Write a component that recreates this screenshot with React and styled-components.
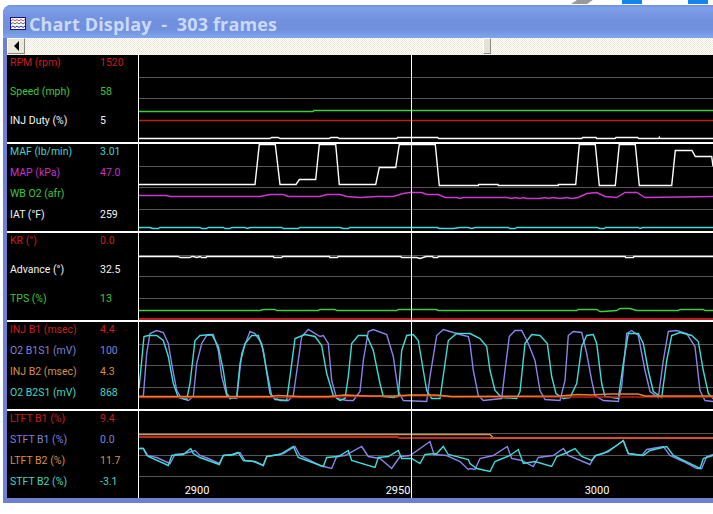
import React from 'react';
import styled, { createGlobalStyle } from 'styled-components';

const RED = '#c01c1c';
const GREEN = '#3ed03e';
const WHITE = '#ffffff';
const CYAN = '#3fdcd8';
const MAGENTA = '#d038d0';
const PURPLE = '#8a84e8';
const ORANGE = '#e8802c';
const TAN = '#c8985a';

const LABEL = {
  red: '#c81e1e',
  green: '#3cc83c',
  white: '#f4f4f4',
  cyan: '#44d4cc',
  magenta: '#c832c8',
  purple: '#8080d8',
  orange: '#d89044',
  teal: '#40d8c0',
};

// crop coordinates of the reference -> page coordinates, y snapped to pixel centres
const trace = (pts, dx, dy) =>
  pts.map(([x, y]) => `${(x / 3 + dx).toFixed(1)},${Math.floor(y / 3 + dy) + 0.5}`).join(' ');

const join = (...parts) => parts.join(' ');

const PANELS = [
  {
    top: 55,
    gap: 15,
    grid: [77.5, 98.5],
    signals: [
      ['RPM (rpm)', '1520', 'red'],
      ['Speed (mph)', '58', 'green'],
      ['INJ Duty (%)', '5', 'white'],
    ],
    lines: [
      { color: GREEN, points: '139,111.5 313,111.5 314,110.5 713,110.5' },
      { color: RED, points: '139,120.5 713,120.5' },
      {
        color: WHITE,
        points: join(
          trace([[416, 415], [810, 415], [815, 412], [835, 412], [840, 415], [988, 415], [992, 412], [1013, 412], [1018, 415], [1079, 415]], 0, 0),
          trace([[0, 415], [110, 415], [113, 412], [233, 412], [236, 415], [665, 415], [668, 412], [708, 412], [710, 415], [765, 415], [768, 412], [833, 412], [836, 415], [897, 415], [898, 412], [899, 415], [1059, 415]], 360, 0),
        ),
      },
    ],
  },
  {
    top: 144,
    gap: 7,
    grid: [166.5, 187.5, 209.5],
    signals: [
      ['MAF (lb/min)', '3.01', 'cyan'],
      ['MAP (kPa)', '47.0', 'magenta'],
      ['WB O2 (afr)', '', 'green'],
      ['IAT (°F)', '259', 'white'],
    ],
    lines: [
      {
        color: CYAN,
        points: join(
          trace([[416, 262], [450, 262], [458, 265], [475, 265], [480, 262], [600, 262], [605, 265], [620, 265], [625, 262], [670, 262], [675, 265], [690, 265], [695, 262], [735, 262], [742, 265], [750, 262], [845, 262], [850, 265], [895, 265], [900, 262], [1020, 262], [1030, 265], [1045, 265], [1050, 262], [1079, 262]], 0, 140),
          trace([[0, 262], [232, 262], [238, 265], [280, 265], [300, 262], [325, 262], [335, 265], [345, 262], [445, 262], [450, 265], [465, 265], [470, 262], [712, 262], [720, 265], [732, 265], [737, 262], [835, 262], [840, 265], [848, 262], [1059, 262]], 360, 140),
        ),
      },
      {
        color: MAGENTA,
        points: join(
          trace([[416, 165], [500, 167], [510, 170], [780, 170], [810, 163], [850, 163], [865, 170], [960, 170], [980, 163], [1020, 163], [1040, 170], [1079, 172]], 0, 140),
          trace([[0, 172], [50, 170], [100, 170], [130, 160], [150, 157], [185, 157], [200, 162], [235, 164], [255, 172], [290, 172], [300, 175], [310, 172], [440, 172], [455, 174], [465, 172], [480, 175], [490, 172], [500, 176], [540, 176], [555, 173], [565, 176], [580, 172], [600, 175], [620, 173], [635, 175], [655, 172], [680, 160], [710, 157], [735, 170], [770, 172], [795, 158], [830, 158], [855, 172], [1059, 170]], 360, 140),
        ),
      },
      {
        color: WHITE,
        points: join(
          trace([[416, 133], [765, 133], [778, 12], [826, 12], [840, 133], [888, 133], [898, 118], [947, 118], [958, 12], [1007, 12], [1018, 133], [1079, 133]], 0, 140),
          trace([[0, 133], [47, 133], [58, 82], [107, 82], [118, 12], [226, 12], [238, 136], [355, 136], [356, 133], [414, 133], [415, 136], [595, 136], [595, 133], [647, 133], [658, 12], [706, 12], [718, 136], [766, 136], [778, 12], [826, 12], [838, 136], [935, 136], [946, 31], [996, 31], [1006, 49], [1055, 49], [1059, 80]], 360, 140),
        ),
      },
    ],
  },
  {
    top: 233,
    gap: 15,
    grid: [255.5, 276.5, 298.5],
    signals: [
      ['KR (°)', '0.0', 'red'],
      ['Advance (°)', '32.5', 'white'],
      ['TPS (%)', '13', 'green'],
    ],
    lines: [
      {
        color: WHITE,
        points: join(
          trace([[416, 350], [535, 350], [540, 352], [570, 352], [575, 350], [580, 350], [590, 352], [600, 350], [605, 352], [618, 352], [620, 350], [820, 350], [822, 352], [845, 352], [848, 350], [988, 350], [990, 352], [1012, 352], [1015, 350], [1079, 350]], 0, 140),
          trace([[0, 350], [122, 350], [125, 352], [170, 352], [180, 355], [198, 350], [218, 350], [220, 352], [233, 352], [235, 350], [795, 350], [797, 352], [820, 352], [822, 350], [1059, 350]], 360, 140),
        ),
      },
      {
        color: GREEN,
        points: join(
          trace([[416, 511], [780, 511], [790, 508], [825, 508], [830, 511], [955, 511], [960, 508], [1005, 508], [1010, 511], [1079, 511]], 0, 140),
          trace([[0, 511], [110, 511], [115, 508], [228, 508], [235, 511], [650, 511], [655, 507], [710, 508], [720, 513], [730, 513], [770, 510], [780, 506], [810, 506], [830, 511], [955, 511], [960, 508], [1030, 508], [1035, 511], [1059, 511]], 360, 140),
        ),
      },
      { color: RED, width: 2, points: '139,319 713,319' },
    ],
  },
  {
    top: 322,
    gap: 7,
    grid: [344.5, 365.5, 387.5],
    signals: [
      ['INJ B1 (msec)', '4.4', 'red'],
      ['O2 B1S1 (mV)', '100', 'purple'],
      ['INJ B2 (msec)', '4.3', 'orange'],
      ['O2 B2S1 (mV)', '868', 'teal'],
    ],
    lines: [
      {
        color: PURPLE,
        points: join(
          trace([[417, 228], [430, 228], [440, 100], [450, 40], [470, 32], [490, 38], [505, 70], [515, 130], [530, 210], [545, 235], [565, 240], [580, 230], [590, 130], [605, 70], [620, 45], [640, 42], [655, 90], [665, 170], [680, 225], [690, 235]], 0, 320),
          trace([[0, 232], [20, 235], [35, 100], [60, 35], [75, 40], [95, 70], [110, 150], [125, 225], [150, 242], [175, 240], [190, 225], [205, 120], [215, 50], [235, 28], [270, 48], [280, 45], [295, 70], [305, 180], [320, 235], [350, 242], [370, 240], [390, 215], [400, 120], [415, 35], [430, 28], [470, 42], [490, 110], [505, 215], [520, 240], [590, 245], [600, 170], [620, 45], [640, 28], [660, 35], [690, 42], [715, 50]], 230, 320),
          trace([[0, 70], [10, 150], [25, 225], [40, 240], [95, 235], [105, 150], [118, 50], [135, 30], [155, 32], [175, 70], [195, 120], [210, 210], [225, 238], [270, 240], [285, 180], [295, 45], [310, 33], [335, 37], [350, 100], [365, 180], [375, 225], [400, 240], [445, 245], [455, 200], [470, 40], [485, 30], [505, 45], [525, 150], [540, 215], [565, 232], [580, 120], [595, 35], [620, 30], [650, 40], [675, 80], [690, 210], [705, 240], [729, 243]], 470, 320),
        ),
      },
      {
        color: CYAN,
        points: join(
          trace([[417, 205], [425, 120], [432, 50], [445, 45], [470, 45], [490, 60], [505, 110], [520, 190], [535, 232], [560, 238], [570, 190], [585, 60], [600, 45], [635, 42], [655, 80], [670, 150], [680, 220], [690, 232]], 0, 320),
          trace([[0, 235], [20, 232], [30, 130], [45, 70], [65, 47], [85, 47], [100, 90], [120, 220], [135, 238], [170, 240], [180, 170], [195, 55], [225, 42], [255, 50], [275, 75], [290, 160], [310, 225], [330, 240], [345, 235], [355, 170], [365, 70], [385, 47], [410, 47], [430, 90], [450, 190], [460, 228], [490, 232], [505, 230], [515, 90], [530, 45], [550, 42], [565, 60], [580, 150], [590, 210], [605, 235], [630, 235], [645, 130], [655, 60], [680, 40], [715, 40]], 230, 320),
          trace([[0, 40], [30, 55], [50, 80], [60, 150], [75, 210], [95, 233], [140, 235], [150, 215], [165, 70], [185, 42], [210, 45], [232, 70], [245, 170], [258, 220], [280, 235], [300, 232], [320, 190], [335, 80], [350, 45], [370, 42], [380, 70], [395, 190], [405, 230], [445, 235], [460, 130], [475, 40], [505, 40], [520, 70], [535, 150], [550, 215], [575, 232], [590, 120], [605, 45], [630, 37], [665, 45], [685, 65], [700, 150], [715, 220], [729, 235]], 470, 320),
        ),
      },
      {
        color: RED,
        points: '139,397.5 330,397.5 350,396.5 398,396.5 412,395.5 440,396 452,397 470,397 713,397',
      },
      {
        color: ORANGE,
        points: '139,396.5 170,396.5 270,396.5 278,395.5 300,396.5 328,396.5 345,395 368,396 395,396 410,395 436,395 452,396.5 560,396 578,394.5 590,395 610,394 638,394 645,396 713,396',
      },
    ],
  },
  {
    top: 411,
    gap: 7,
    grid: [433.5, 455.5, 476.5],
    signals: [
      ['LTFT B1 (%)', '9.4', 'red'],
      ['STFT B1 (%)', '0.0', 'purple'],
      ['LTFT B2 (%)', '11.7', 'orange'],
      ['STFT B2 (%)', '-3.1', 'teal'],
    ],
    ticks: [
      ['2900', 197],
      ['2950', 398],
      ['3000', 597],
    ],
    lines: [
      { color: TAN, points: '139,434.5 490,434.5 493,437.5' },
      { color: '#c02a1c', width: 2, points: '139,437 397,437 400,438 490,438' },
      { color: '#e04a1c', width: 2, points: '490,438 713,438' },
      {
        color: PURPLE,
        points: join(
          trace([[417, 385], [430, 385], [440, 405], [470, 412], [510, 430], [525, 403], [555, 400], [585, 392], [600, 405], [625, 415], [658, 430], [670, 405], [700, 403], [715, 398]], 0, 320),
          trace([[0, 405], [30, 398], [45, 420], [70, 425], [100, 435], [110, 410], [160, 400], [195, 380], [210, 405], [270, 435], [305, 445], [320, 408], [345, 405], [395, 380], [415, 410], [450, 415], [485, 445], [510, 408], [540, 405], [600, 365], [612, 402], [650, 405], [690, 425], [715, 448]], 230, 320),
          trace([[0, 445], [15, 448], [30, 415], [70, 405], [112, 380], [125, 415], [155, 420], [190, 440], [205, 412], [250, 405], [280, 385], [295, 405], [360, 432], [375, 405], [400, 400], [440, 375], [460, 362], [475, 400], [515, 405], [530, 388], [580, 378], [600, 405], [640, 425], [680, 445], [695, 445], [710, 408], [729, 403]], 470, 320),
        ),
      },
      {
        color: CYAN,
        points: join(
          trace([[417, 385], [430, 385], [445, 408], [505, 437], [515, 405], [550, 402], [572, 385], [580, 400], [600, 413], [658, 433], [670, 405], [700, 403], [715, 398]], 0, 320),
          trace([[0, 405], [25, 398], [40, 420], [75, 425], [100, 437], [110, 410], [150, 403], [190, 380], [205, 412], [280, 440], [290, 412], [325, 408], [355, 392], [365, 420], [435, 442], [445, 412], [475, 410], [505, 392], [515, 415], [545, 415], [570, 430], [585, 402], [620, 400], [640, 380], [655, 402], [715, 418]], 230, 320),
          trace([[0, 430], [20, 445], [60, 455], [75, 425], [120, 405], [145, 388], [160, 430], [195, 425], [245, 440], [260, 410], [285, 400], [315, 385], [335, 410], [365, 420], [378, 405], [415, 395], [460, 360], [475, 400], [520, 407], [540, 390], [590, 380], [610, 405], [690, 445], [700, 415], [729, 405]], 470, 320),
        ),
      },
    ],
  },
];

const GlobalStyle = createGlobalStyle`
  html, body {
    margin: 0;
    padding: 0;
    background: #fff;
    overflow: hidden;
  }
`;

const Desktop = styled.div`
  position: relative;
  width: 713px;
  height: 514px;
  padding: 5px 0 0 3px;
  box-sizing: border-box;
  background: #fff;
  overflow: hidden;
`;

const Peek = styled.div`
  position: absolute;
  top: 0;
  left: ${(p) => p.$left}px;
  width: ${(p) => p.$width}px;
  height: 4px;
  background: ${(p) => p.$color};
  ${(p) => p.$skew && 'transform: skewX(-55deg);'}
`;

const Window = styled.div`
  width: 710px;
  box-sizing: border-box;
  display: flex;
  flex-direction: column;
  background: #6e80cf;
  border-radius: 8px 0 0 0;
  padding: 0 0 5px 4px;
`;

const TitleBar = styled.div`
  height: 33px;
  margin-left: -4px;
  padding: 4px 0 0 7px;
  box-sizing: border-box;
  display: flex;
  align-items: center;
  gap: 3px;
  border-radius: 8px 0 0 0;
  background: linear-gradient(#6f92df 0, #7f9fe8 3px, #7292e0 14px, #6f8fdd 24px, #80a6ec 33px);
`;

const TitleText = styled.span`
  font-family: 'Open Sans', sans-serif;
  font-weight: 700;
  font-size: 18px;
  letter-spacing: 0.15px;
  color: #cbd9f8;
  white-space: pre;
`;

const ScrollRow = styled.div`
  height: 17px;
  display: flex;
  align-items: stretch;
  background: repeating-conic-gradient(#ece9d8 0 25%, #fff 0 50%) 0 0 / 2px 2px;
`;

const ArrowButton = styled.div`
  width: 18px;
  height: 16px;
  box-sizing: border-box;
  display: flex;
  align-items: center;
  justify-content: center;
  background: #ebe9dc;
  border: 1px solid;
  border-color: #fff #8c8a80 #8c8a80 #fff;
`;

const Track = styled.div`
  flex: 1;
  padding-left: 458px;
`;

const Thumb = styled.div`
  width: 8px;
  height: 16px;
  box-sizing: border-box;
  background: #e4e2d6;
  border: 1px solid;
  border-color: #fff #8c8a80 #8c8a80 #fff;
`;

const Charts = styled.div`
  display: flex;
  flex-direction: column;
  gap: 2px;
  background: #fff;
`;

const Panel = styled.section`
  height: 87px;
  display: flex;
  background: #000;
`;

const Legend = styled.div`
  width: 132px;
  flex: none;
  box-sizing: border-box;
  padding: 1px 0 0 3px;
  display: flex;
  flex-direction: column;
  gap: ${(p) => p.$gap}px;
  border-right: 1px solid #fff;
`;

const Signal = styled.div`
  height: 14px;
  display: grid;
  grid-template-columns: 90px 1fr;
  font-family: Roboto, sans-serif;
  font-size: 10.5px;
  line-height: 14px;
  white-space: nowrap;
  color: ${(p) => LABEL[p.$tone]};
`;

const Plot = styled.div`
  position: relative;
  flex: 1;
  min-width: 0;
`;

const PlotSvg = styled.svg`
  display: block;
  width: 100%;
  height: 87px;
`;

const Tick = styled.span`
  position: absolute;
  bottom: 0;
  left: ${(p) => p.$x - 139}px;
  font-family: Roboto, sans-serif;
  font-size: 11px;
  line-height: 14px;
  color: #fff;
  transform: translateX(-50%);
`;

const WindowIcon = () => (
  <svg width="16" height="13" viewBox="0 0 16 13">
    <rect x="0.5" y="0.5" width="15" height="12" fill="#fff" stroke="#10108a" />
    <path d="M1 4l2-1.5 2 1.5 2-1.5 2 1.5 2-1.5 2 1.5 2-1.5" fill="none" stroke="#d04848" />
    <path d="M1 7l2-1.5 2 1.5 2-1.5 2 1.5 2-1.5 2 1.5 2-1.5" fill="none" stroke="#606060" />
    <path d="M1 10.5l2-1.5 2 1.5 2-1.5 2 1.5 2-1.5 2 1.5 2-1.5" fill="none" stroke="#2020c0" />
  </svg>
);

const ChartPanel = ({ panel }) => (
  <Panel>
    <Legend $gap={panel.gap}>
      {panel.signals.map(([name, value, tone]) => (
        <Signal key={name} $tone={tone}>
          <span>{name}</span>
          <span>{value}</span>
        </Signal>
      ))}
    </Legend>
    <Plot>
      <PlotSvg viewBox={`139 ${panel.top} 574 87`} preserveAspectRatio="none">
        {panel.grid.map((y) => (
          <line key={y} x1="139" x2="713" y1={y} y2={y} stroke="#555" strokeWidth="1" />
        ))}
        {panel.lines.map((l, i) => (
          <polyline key={i} points={l.points} fill="none" stroke={l.color} strokeWidth={l.width || 1.4} />
        ))}
        <line x1="411.5" x2="411.5" y1={panel.top} y2={panel.top + 87} stroke="#fff" strokeWidth="1" />
      </PlotSvg>
      {panel.ticks &&
        panel.ticks.map(([label, x]) => (
          <Tick key={label} $x={x}>
            {label}
          </Tick>
        ))}
    </Plot>
  </Panel>
);

export default function App() {
  return (
    <>
      <GlobalStyle />
      <Desktop>
        <Peek $left={574} $width={16} $color="#9a9a9a" $skew />
        <Peek $left={622} $width={20} $color="#1485e8" />
        <Peek $left={688} $width={20} $color="#1485e8" />
        <Window>
          <TitleBar>
            <WindowIcon />
            <TitleText>Chart Display  -  303 frames</TitleText>
          </TitleBar>
          <ScrollRow>
            <ArrowButton>
              <svg width="5" height="10" viewBox="0 0 5 10">
                <path d="M5 0v10L0 5z" fill="#000" />
              </svg>
            </ArrowButton>
            <Track>
              <Thumb />
            </Track>
          </ScrollRow>
          <Charts>
            {PANELS.map((panel) => (
              <ChartPanel key={panel.top} panel={panel} />
            ))}
          </Charts>
        </Window>
      </Desktop>
    </>
  );
}
